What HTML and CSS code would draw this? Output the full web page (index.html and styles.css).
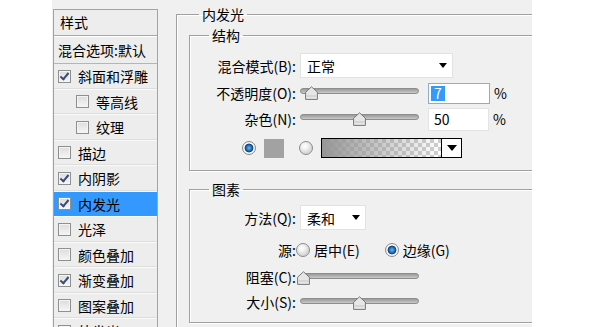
FILE: index.html
```html
<!DOCTYPE html>
<html lang="zh-CN">
<head>
    <meta charset="UTF-8">
    <title>图层样式 - 内发光</title>
    <link rel="stylesheet" href="styles.css">
</head>
<body>

    <div class="dialog">
        <div class="styles-list">
            <div class="list-head">样式</div>
            <div class="list-head blend">混合选项:默认</div>
            <div class="item"><span class="check on"></span>斜面和浮雕</div>
            <div class="item sub"><span class="check"></span>等高线</div>
            <div class="item sub"><span class="check"></span>纹理</div>
            <div class="item"><span class="check"></span>描边</div>
            <div class="item"><span class="check on"></span>内阴影</div>
            <div class="item active"><span class="check on"></span>内发光</div>
            <div class="item"><span class="check"></span>光泽</div>
            <div class="item"><span class="check"></span>颜色叠加</div>
            <div class="item"><span class="check on"></span>渐变叠加</div>
            <div class="item"><span class="check"></span>图案叠加</div>
            <div class="item"><span class="check on"></span>外发光</div>
        </div>

        <fieldset class="group outer">
            <legend>内发光</legend>

            <fieldset class="group structure">
                <legend>结构</legend>
                <div class="row r-select">
                    <span class="label">混合模式(B):</span>
                    <div class="select blend-mode">正常<span class="arrow"></span></div>
                </div>
                <div class="row r-slider">
                    <span class="label">不透明度(O):</span>
                    <div class="slider">
                        <div class="track"></div>
                        <div class="rail"><span class="thumb" style="left: 7%"></span></div>
                    </div>
                    <div class="field focus"><span class="sel">7</span></div>
                    <span class="unit">%</span>
                </div>
                <div class="row r-slider noise">
                    <span class="label">杂色(N):</span>
                    <div class="slider">
                        <div class="track"></div>
                        <div class="rail"><span class="thumb" style="left: 50%"></span></div>
                    </div>
                    <div class="field">50</div>
                    <span class="unit">%</span>
                </div>
                <div class="row r-color">
                    <span class="radio on"></span>
                    <span class="swatch"></span>
                    <span class="radio second"></span>
                    <div class="gradient">
                        <div class="gradient-fill"></div>
                        <div class="gradient-drop"><span class="arrow"></span></div>
                    </div>
                </div>
            </fieldset>

            <fieldset class="group elements">
                <legend>图素</legend>
                <div class="row r-select">
                    <span class="label">方法(Q):</span>
                    <div class="select method">柔和<span class="arrow"></span></div>
                </div>
                <div class="row r-source">
                    <span class="label">源:</span>
                    <span class="radio"></span>
                    <span class="opt">居中(E)</span>
                    <span class="radio on edge"></span>
                    <span class="opt">边缘(G)</span>
                </div>
                <div class="row r-slider choke">
                    <span class="label">阻塞(C):</span>
                    <div class="slider">
                        <div class="track"></div>
                        <div class="rail"><span class="thumb" style="left: 0%"></span></div>
                    </div>
                </div>
                <div class="row r-slider size">
                    <span class="label">大小(S):</span>
                    <div class="slider">
                        <div class="track"></div>
                        <div class="rail"><span class="thumb" style="left: 50%"></span></div>
                    </div>
                </div>
            </fieldset>
        </fieldset>
    </div>

</body>
</html>
```

FILE: styles.css
```css
body {
    margin: 0;
    padding: 0;
    background-color: #fff;
    color: #000;
    font-family: 'Noto Sans CJK SC', 'Liberation Sans', sans-serif;
    font-size: 14px;
    width: 595px;
    height: 327px;
    overflow: hidden;
}
.dialog {
    margin-left: 52px;
    width: 480px;
    height: 327px;
    background-color: #f0f0f0;
    display: flex;
    align-items: flex-start;
    overflow: hidden;
}

/* left list */
.styles-list {
    margin: 9px 0 0 1px;
    width: 103px;
    flex-shrink: 0;
    border: 1px solid #a3a3a3;
    border-bottom: none;
    background-color: #ededed;
}
.list-head {
    height: 25px;
    line-height: 25px;
    padding-left: 6px;
    border-bottom: 1px solid #a8a8a8;
}
.list-head.blend {
    height: 26px;
    line-height: 26px;
    padding-left: 4px;
    border-top: 1px solid #fff;
    border-bottom: 1px solid #b5b5b5;
}
.item {
    display: flex;
    align-items: center;
    height: 24.5px;
    padding-left: 4px;
    border-bottom: 1px solid #f9f9f9;
    box-shadow: inset 0 -1px 0 #dedede;
}
.item.sub {
    padding-left: 22px;
}
.item.active {
    background-color: #3399ff;
    box-shadow: none;
}
.check {
    position: relative;
    width: 11px;
    height: 11px;
    margin-right: 7px;
    border: 1px solid #8e8f8f;
    background: linear-gradient(#dcdcdc, #f6f6f6);
    box-shadow: inset 0 0 0 1px #f4f4f4;
}
.check.on::after {
    content: '';
    position: absolute;
    left: 3px;
    top: 0px;
    width: 3px;
    height: 7px;
    border-right: 2px solid #3b4a7a;
    border-bottom: 2px solid #3b4a7a;
    transform: rotate(40deg);
}

/* group boxes */
.group {
    margin: 0;
    border: 1px solid #a0a0a0;
    box-shadow: inset 1px 1px 0 #fff, 1px 1px 0 #fff;
}
.group legend {
    padding: 0 3px;
    line-height: 18px;
    margin-left: 9px;
}
.outer {
    margin: 5px 0 0 18px;
    padding: 3px 0 0 12px;
    width: 400px;
    flex-shrink: 0;
    height: 340px;
}
.outer > legend {
    margin-left: 10px;
}
.structure {
    padding: 9px 0 12px 10px;
    width: 380px;
}
.elements {
    margin-top: 9px;
    padding: 7px 0 10px 10px;
    width: 380px;
}

/* rows */
.row {
    display: flex;
    align-items: center;
}
.label {
    width: 96px;
    margin-right: 4px;
    text-align: right;
    white-space: nowrap;
}
.r-select {
    height: 25px;
}
.r-slider {
    height: 22px;
    margin-top: 4px;
}
.r-color {
    height: 20px;
    margin-top: 8px;
}
.elements .r-source {
    height: 20px;
    margin-top: 10px;
}
.elements .choke {
    height: 20px;
    margin-top: 7px;
}
.elements .size {
    height: 20px;
    margin-top: 5px;
}

.select {
    display: flex;
    align-items: center;
    height: 23px;
    padding: 0 5px 0 6px;
    background-color: #fff;
    border: 1px solid #e2e2e2;
}
.blend-mode {
    width: 140px;
}
.method {
    width: 53px;
}
.arrow {
    margin-left: auto;
    width: 0;
    height: 0;
    border-left: 4px solid transparent;
    border-right: 4px solid transparent;
    border-top: 5px solid #000;
}

/* slider */
.slider {
    position: relative;
    width: 119px;
    height: 100%;
}
.track {
    margin-top: 6px;
    height: 4px;
    border: 1px solid #8d8d8d;
    border-radius: 3px;
    background: linear-gradient(#9a9a9a, #c9c9c9);
}
.rail {
    position: absolute;
    left: 3px;
    right: 4px;
    top: 4px;
    height: 14px;
}
.thumb {
    position: absolute;
    top: 0;
    width: 13px;
    height: 14px;
    margin-left: -6px;
    background: url("data:image/svg+xml,%3Csvg xmlns='http://www.w3.org/2000/svg' width='13' height='14'%3E%3Cpath d='M6.5 0.8 L12.4 6.2 V13.4 H0.6 V6.2 Z' fill='%23e6e6e6' stroke='%23777' stroke-width='1'/%3E%3Cpath d='M1.5 10 H11.5' stroke='%23c4c4c4'/%3E%3C/svg%3E") no-repeat;
}
.field {
    margin-left: 9px;
    width: 55px;
    height: 19px;
    padding-left: 5px;
    line-height: 19px;
    background-color: #fff;
    border: 1px solid #e3e3e3;
}
.field.focus {
    border-color: #86aedb;
    padding-left: 2px;
    width: 58px;
}
.noise .field {
    height: 21px;
    line-height: 21px;
    width: 54px;
}
.sel {
    display: inline-block;
    padding: 0 3px;
    line-height: 15px;
    background-color: #3399ff;
    color: #fff;
}
.unit {
    margin-left: 4px;
}

/* colour row */
.radio {
    width: 12px;
    height: 12px;
    border-radius: 50%;
    border: 1px solid #8b8b8b;
    background: radial-gradient(circle at 40% 35%, #fff 0, #f2f2f2 3px, #d6d6d6 7px);
}
.radio.on {
    background: radial-gradient(circle, #6fb6ee 0, #2474c0 2.5px, #0f3f78 4px, #fff 4.8px, #fff 5.2px, #dcdcdc 6.5px);
}
.r-color .radio.on {
    margin-left: 42px;
}
.swatch {
    margin-left: 8px;
    width: 20px;
    height: 19px;
    background-color: #a2a2a2;
}
.radio.second {
    margin-left: 15px;
}
.gradient {
    display: flex;
    margin-left: 8px;
    width: 139px;
    height: 18px;
    border: 1px solid #000;
}
.gradient-fill {
    flex: 1;
    background:
        linear-gradient(to right, rgba(150, 150, 150, 1), rgba(150, 150, 150, 0)),
        conic-gradient(#cfcfcf 25%, #fff 0 50%, #cfcfcf 0 75%, #fff 0) 0 0 / 8px 8px;
}
.gradient-drop {
    display: flex;
    align-items: center;
    justify-content: center;
    width: 19px;
    background-color: #fff;
    border-left: 1px solid #000;
}
.gradient-drop .arrow {
    margin-left: 0;
    border-left-width: 5px;
    border-right-width: 5px;
    border-top-width: 6px;
}

/* source row */
.r-source .label {
    margin-right: 0;
}
.opt {
    margin-left: 4px;
}
.radio.edge {
    margin-left: 25px;
}
```
